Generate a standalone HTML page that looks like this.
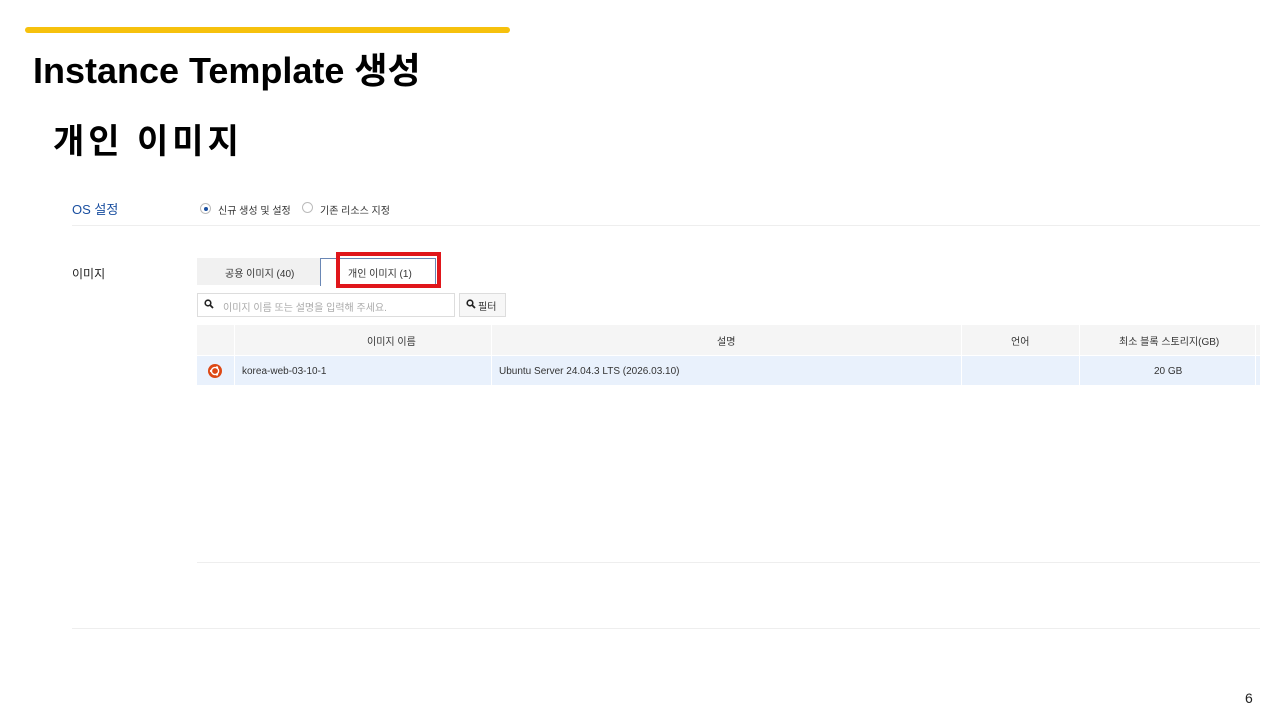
<!DOCTYPE html>
<html><head><meta charset="utf-8">
<style>
*{margin:0;padding:0;box-sizing:border-box}
body{width:1280px;height:720px;background:#fff;position:relative;overflow:hidden;font-family:"Liberation Sans","Noto Sans CJK KR",sans-serif;color:#222}
.a{position:absolute;white-space:nowrap}
.s{font-size:10px;color:#333}
</style></head><body>
<div class="a" style="left:25px;top:27px;width:485px;height:6px;background:#f6c10d;border-radius:3px"></div>
<div class="a" style="left:33px;top:42px;font-size:36px;font-weight:bold;color:#000">Instance Template 생성</div>
<div class="a" style="left:53px;top:114px;font-size:34px;font-weight:bold;color:#000;letter-spacing:4px">개인 이미지</div>

<div class="a" style="left:72px;top:199px;font-size:13px;color:#1a4fa0">OS 설정</div>
<div class="a" style="left:200px;top:203px;width:11px;height:11px;border:1px solid #bbb;border-radius:50%"></div>
<div class="a" style="left:204px;top:207px;width:4px;height:4px;background:#1a4fa0;border-radius:50%"></div>
<div class="a s" style="left:218px;top:202px">신규 생성 및 설정</div>
<div class="a" style="left:302px;top:202px;width:11px;height:11px;border:1px solid #bbb;border-radius:50%"></div>
<div class="a s" style="left:320px;top:202px">기존 리소스 지정</div>
<div class="a" style="left:72px;top:225px;width:1188px;height:1px;background:#eee"></div>

<div class="a" style="left:72px;top:265px;font-size:12px;color:#222">이미지</div>
<div class="a" style="left:197px;top:258px;width:124px;height:27px;background:#f1f1f1"></div>
<div class="a s" style="left:225px;top:265px">공용 이미지 (40)</div>
<div class="a" style="left:320px;top:258px;width:116px;height:28px;border:1px solid #6a87b5;border-bottom:none;background:#fff"></div>
<div class="a s" style="left:348px;top:265px">개인 이미지 (1)</div>
<div class="a" style="left:336px;top:252px;width:105px;height:36px;border:4px solid #e0161b"></div>

<div class="a" style="left:197px;top:293px;width:258px;height:24px;border:1px solid #ddd"></div>
<svg class="a" style="left:204px;top:299px" width="10" height="10" viewBox="0 0 10 10"><circle cx="4" cy="4" r="2.8" fill="none" stroke="#222" stroke-width="1.6"/><path d="M6 6 L9 9" stroke="#222" stroke-width="1.8"/></svg>
<div class="a" style="left:223px;top:299px;font-size:10px;color:#aaa">이미지 이름 또는 설명을 입력해 주세요.</div>
<div class="a" style="left:459px;top:293px;width:47px;height:24px;border:1px solid #ddd;background:#f7f7f7"></div>
<svg class="a" style="left:466px;top:299px" width="10" height="10" viewBox="0 0 10 10"><circle cx="4" cy="4" r="2.8" fill="none" stroke="#222" stroke-width="1.6"/><path d="M6 6 L9 9" stroke="#222" stroke-width="1.8"/></svg>
<div class="a s" style="left:478px;top:298px">필터</div>

<div class="a" style="left:197px;top:325px;width:1063px;height:30px;background:#f5f5f5"></div>
<div class="a" style="left:197px;top:356px;width:1063px;height:29px;background:#e9f1fc"></div>
<div class="a" style="left:234px;top:325px;width:1px;height:60px;background:#fff"></div>
<div class="a" style="left:491px;top:325px;width:1px;height:60px;background:#fff"></div>
<div class="a" style="left:961px;top:325px;width:1px;height:60px;background:#fff"></div>
<div class="a" style="left:1079px;top:325px;width:1px;height:60px;background:#fff"></div>
<div class="a" style="left:1255px;top:325px;width:1px;height:60px;background:#fff"></div>
<div class="a s" style="left:367px;top:333px">이미지 이름</div>
<div class="a s" style="left:717px;top:333px">설명</div>
<div class="a s" style="left:1011px;top:333px">언어</div>
<div class="a s" style="left:1119px;top:333px">최소 블록 스토리지(GB)</div>
<svg class="a" style="left:208px;top:364px" width="14" height="14" viewBox="0 0 14 14"><circle cx="7" cy="7" r="7" fill="#dd4814"/><circle cx="7" cy="7" r="3.6" fill="none" stroke="#fff" stroke-width="1.4"/><circle cx="3" cy="7" r="1.2" fill="#fff"/><circle cx="9" cy="3.5" r="1.2" fill="#fff"/><circle cx="9" cy="10.5" r="1.2" fill="#fff"/></svg>
<div class="a s" style="left:242px;top:366px">korea-web-03-10-1</div>
<div class="a s" style="left:499px;top:366px">Ubuntu Server 24.04.3 LTS (2026.03.10)</div>
<div class="a s" style="left:1154px;top:366px">20 GB</div>

<div class="a" style="left:197px;top:562px;width:1063px;height:1px;background:#eee"></div>
<div class="a" style="left:72px;top:628px;width:1188px;height:1px;background:#eee"></div>
<div class="a" style="left:1245px;top:690px;font-size:14px;color:#222">6</div>
</body></html>
